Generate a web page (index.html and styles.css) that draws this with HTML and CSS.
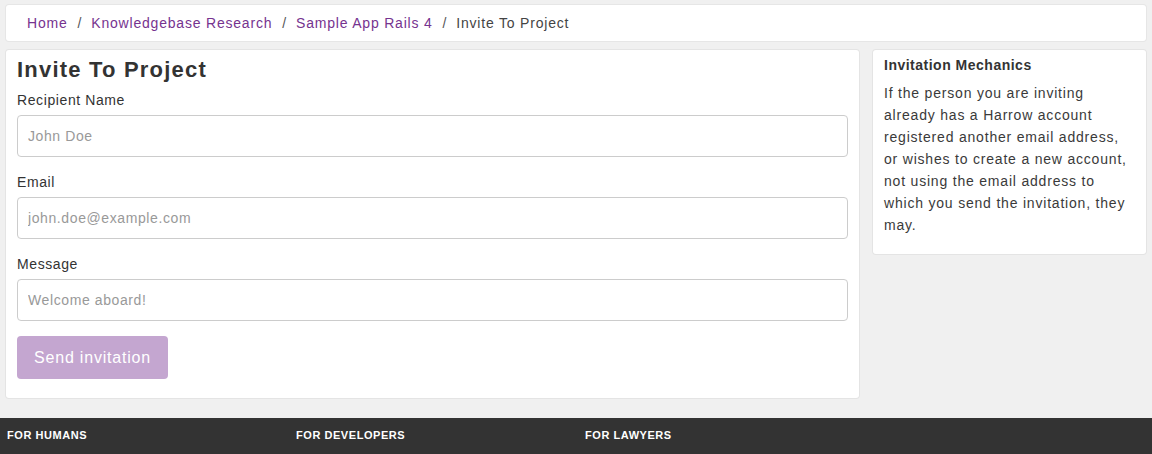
FILE: index.html
```html
<!DOCTYPE html>
<html lang="en">
<head>
<meta charset="utf-8">
<title>Invite To Project</title>
<link rel="stylesheet" href="styles.css">
</head>
<body>
<div class="page">
  <nav class="breadcrumb">
    <a href="#">Home</a><span class="sep">/</span>
    <a href="#">Knowledgebase Research</a><span class="sep">/</span>
    <a href="#">Sample App Rails 4</a><span class="sep">/</span>
    <span class="current">Invite To Project</span>
  </nav>
  <div class="layout">
    <section class="card main">
      <h1 class="title">Invite To Project</h1>
      <form class="form">
        <div class="field">
          <label class="label">Recipient Name</label>
          <input class="input" type="text" placeholder="John Doe">
        </div>
        <div class="field">
          <label class="label">Email</label>
          <input class="input" type="text" placeholder="john.doe@example.com">
        </div>
        <div class="field">
          <label class="label">Message</label>
          <input class="input" type="text" placeholder="Welcome aboard!">
        </div>
        <div class="actions">
          <button class="btn" type="button">Send invitation</button>
        </div>
      </form>
    </section>
    <aside class="card side">
      <h2 class="side-title">Invitation Mechanics</h2>
      <p class="side-text">If the person you are inviting already has a Harrow account registered another email address, or wishes to create a new account, not using the email address to which you send the invitation, they may.</p>
    </aside>
  </div>
</div>
<footer class="footer">
  <div class="fcol">For Humans</div>
  <div class="fcol">For Developers</div>
  <div class="fcol">For Lawyers</div>
  <div class="fcol"></div>
</footer>
</body>
</html>
```

FILE: styles.css
```css
* { box-sizing: border-box; }
html, body { margin: 0; padding: 0; }
body {
  background: #f0f0f0;
  font-family: "Liberation Sans", Arial, sans-serif;
  color: #333;
  font-size: 14px;
  height: 454px;
  overflow: hidden;
}
.page { padding: 5px 6px 0 6px; }
.breadcrumb {
  background: #fff;
  border-radius: 3px;
  box-shadow: 0 0 0 1px #e6e6e6;
  height: 36px;
  display: flex;
  align-items: center;
  padding: 0 21px;
  font-size: 14px;
  letter-spacing: 0.8px;
}
.breadcrumb a { color: #76338f; text-decoration: none; }
.breadcrumb .sep { color: #555; margin: 0 9px 0 10px; }
.breadcrumb .current { color: #444; }
.layout {
  display: grid;
  grid-template-columns: 853px 1fr;
  gap: 14px;
  margin-top: 9px;
  align-items: start;
}
.card {
  background: #fff;
  border-radius: 3px;
  box-shadow: 0 0 0 1px #e4e4e4;
}
.main { padding: 6px 11px 19px 11px; }
.title {
  margin: 0;
  font-size: 22px;
  line-height: 28px;
  font-weight: bold;
  letter-spacing: 1.2px;
  color: #333;
}
.form { margin-top: 6px; display: flex; flex-direction: column; gap: 15px; }
.field { display: flex; flex-direction: column; gap: 5px; }
.label { font-size: 14px; line-height: 20px; letter-spacing: 0.6px; color: #333; }
.input {
  height: 42px;
  border: 1px solid #ccc;
  border-radius: 4px;
  padding: 0 10px;
  font-family: "Liberation Sans", Arial, sans-serif;
  font-size: 14px;
  letter-spacing: 0.6px;
  color: #333;
  background: #fff;
  outline: none;
}
.input::placeholder { color: #999; }
.actions { display: flex; }
.btn {
  height: 43px;
  width: 151px;
  border: none;
  border-radius: 4px;
  background: #c4a6d0;
  color: #fff;
  font-family: "Liberation Sans", Arial, sans-serif;
  font-size: 16px;
  letter-spacing: 0.8px;
  padding: 0;
}
.side { padding: 4px 11px 18px 11px; }
.side-title {
  margin: 0 0 6px 0;
  font-size: 14px;
  line-height: 22px;
  font-weight: bold;
  letter-spacing: 0.5px;
  color: #333;
}
.side-text {
  margin: 0;
  font-size: 14px;
  line-height: 22px;
  letter-spacing: 0.8px;
  color: #3a3a3a;
}
.footer {
  margin-top: 20px;
  background: #333;
  height: 36px;
  display: grid;
  grid-template-columns: repeat(4, 289px);
  padding: 10px 0 0 7px;
}
.fcol {
  color: #fff;
  font-size: 11px;
  font-weight: bold;
  text-transform: uppercase;
  letter-spacing: 0.55px;
  line-height: 14px;
}
```
